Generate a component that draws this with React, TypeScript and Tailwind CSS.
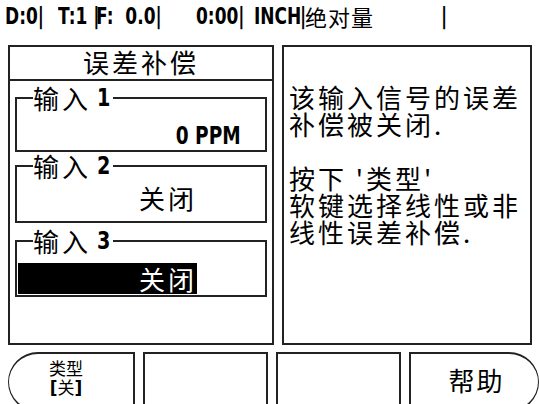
import React from "react";

const cjk = "font-['Noto_Sans_CJK_SC','Noto_Sans_CJK_JP',sans-serif]";
const bold = "font-['DejaVu_Sans',sans-serif] font-bold";

function Cond({ children, w, right = false, size = "text-[23px]" }: { children: React.ReactNode; w: string; right?: boolean; size?: string }) {
  return (
    <span className={`inline-flex shrink-0 ${w} ${right ? "justify-end" : "justify-start"} whitespace-pre`}>
      <span className={`${bold} ${size} inline-block ${right ? "origin-right" : "origin-left"} scale-x-[0.74]`}>{children}</span>
    </span>
  );
}

function Legend({ n }: { n: string }) {
  return (
    <legend className="ml-[16px] p-0 flex items-center h-[26px] leading-[26px]">
      <span className={`${cjk} text-[26px] tracking-[3px]`}>输入</span>
      <span className="inline-flex w-[16px] ml-[6px] leading-[26px]">
        <span className={`${bold} text-[24px] inline-block origin-left scale-x-[0.8]`}>{n}</span>
      </span>
    </legend>
  );
}

export default function App() {
  return (
    <div className="w-[539px] h-[404px] bg-white overflow-hidden text-black">
      {/* status bar */}
      <div className="h-[45px] flex items-start pt-[3px] pl-[5px] leading-[26px]">
        <Cond w="w-[53px]">{"D:0|"}</Cond>
        <Cond w="w-[38px]">{"T:1 |"}</Cond>
        <Cond w="w-[100px]">{"F:  0.0|"}</Cond>
        <Cond w="w-[58px]">{"0:00|"}</Cond>
        <Cond w="w-[46px]">{"INCH"}</Cond>
        <Cond w="w-[5px]">{"|"}</Cond>
        <span className={`${cjk} text-[22px] tracking-[1px] w-[136px] shrink-0 leading-[26px]`}>绝对量</span>
        <Cond w="w-[20px]">{"|"}</Cond>
      </div>

      {/* main panels */}
      <div className="flex h-[300px] pl-[8px] gap-[8px]">
        <div className="w-[266px] h-full border-2 border-[#222] flex flex-col">
          <div className={`${cjk} h-[34px] border-b-2 border-[#222] text-[26px] leading-[30px] tracking-[3px] text-center`}>
            误差补偿
          </div>
          <div className="px-[5px]">
            <fieldset className="mt-[4px] h-[67px] border-2 border-[#222] m-0 p-0">
              <Legend n="1" />
              <div className="w-[224px] flex pt-[6px]">
                <Cond w="w-full" right size="text-[25px]">{"0 PPM"}</Cond>
              </div>
            </fieldset>
            <fieldset className="mt-[1px] h-[70px] border-2 border-[#222] p-0">
              <Legend n="2" />
              <div className="w-[180px] flex justify-end pt-[4px]">
                <span className={`${cjk} text-[26px] leading-[30px] tracking-[3px]`}>关闭</span>
              </div>
            </fieldset>
            <fieldset className="mt-[5px] h-[69px] border-2 border-[#222] p-0">
              <Legend n="3" />
              <div className="ml-[1px] w-[179px] h-[31px] mt-[9px] bg-black text-white flex justify-end items-center">
                <span className={`${cjk} text-[26px] leading-[30px] tracking-[3px]`}>关闭</span>
              </div>
            </fieldset>
          </div>
        </div>

        <div className={`${cjk} w-[250px] h-full border-2 border-[#222] pt-[36px] pl-[5px] text-[26px] leading-[27px] tracking-[3px] whitespace-pre`}>
          <div className="h-[27px]">该输入信号的误差</div>
          <div className="h-[27px]">补偿被关闭.</div>
          <div className="h-[27px]"></div>
          <div className="h-[27px]">按下 '类型'</div>
          <div className="h-[27px]">软键选择线性或非</div>
          <div className="h-[27px]">线性误差补偿.</div>
        </div>
      </div>

      {/* soft keys */}
      <div className="flex mt-[7px] pl-[8px] gap-[8px] h-[60px]">
        <div className="w-[130px] h-full border-2 border-l border-[#222] rounded-l-[30px] flex flex-col items-center pt-[4px] pr-[10px]">
          <span className={`${cjk} text-[17px] leading-[19px]`}>类型</span>
          <span className="leading-[20px]">
            <span className={`${bold} text-[17px]`}>[</span>
            <span className={`${cjk} text-[17px]`}>关</span>
            <span className={`${bold} text-[17px]`}>]</span>
          </span>
        </div>
        <div className="w-[128px] h-full border-2 border-[#222]"></div>
        <div className="w-[128px] h-full border-2 border-[#222]"></div>
        <div className="w-[130px] shrink-0 h-full border-2 border-r border-[#222] rounded-r-[30px] flex justify-center pt-[10px] pl-[4px]">
          <span className={`${cjk} text-[26px] leading-[32px] tracking-[2px]`}>帮助</span>
        </div>
      </div>
    </div>
  );
}
